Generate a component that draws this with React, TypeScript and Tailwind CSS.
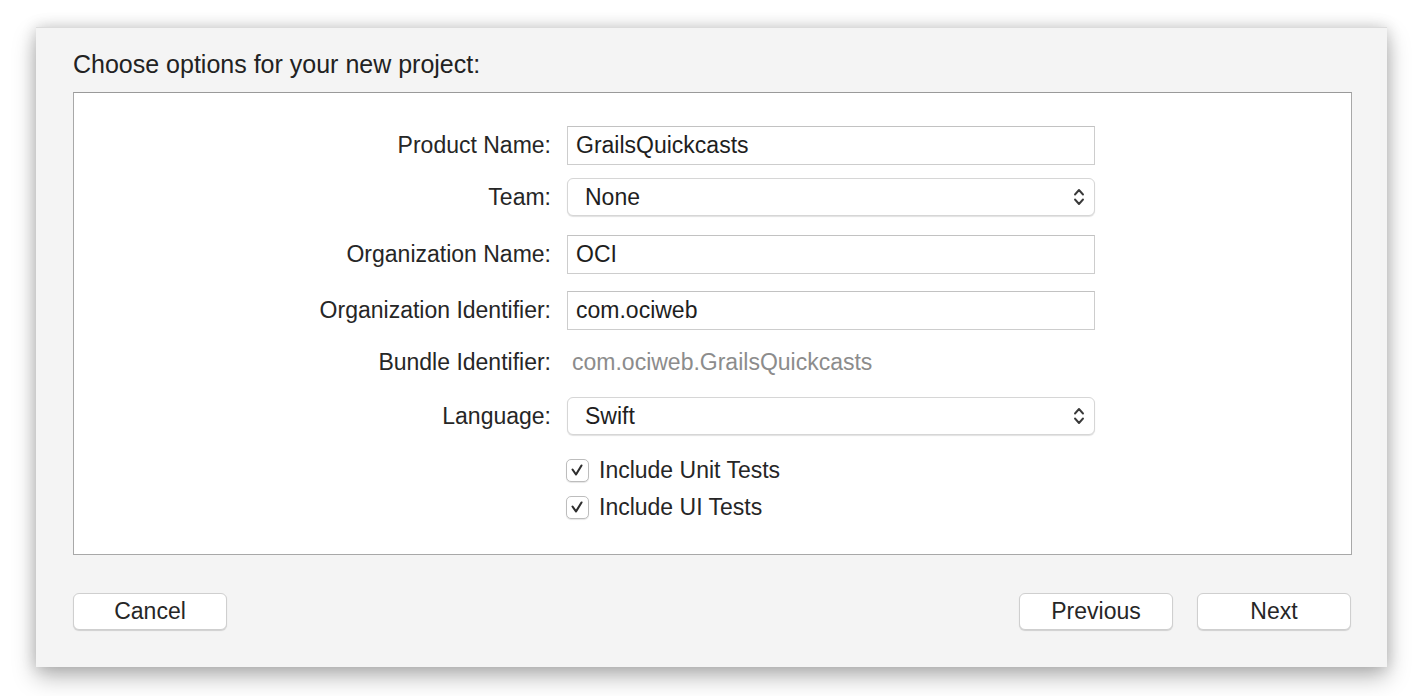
import { FC, ReactNode } from 'react';

const FONT = "font-['Liberation_Sans','Helvetica_Neue',Arial,sans-serif]";

// Up/down caret pair used by the popup buttons
const UpDown: FC = () => (
  <svg width="14" height="24" viewBox="0 0 14 24" fill="none">
    <path d="M3 9.5 L7 5 L11 9.5" stroke="#3a3a3a" strokeWidth="1.9" strokeLinecap="round" strokeLinejoin="round" />
    <path d="M3 14.5 L7 19 L11 14.5" stroke="#3a3a3a" strokeWidth="1.9" strokeLinecap="round" strokeLinejoin="round" />
  </svg>
);

const Check: FC = () => (
  <svg width="20" height="20" viewBox="0 0 20 20" fill="none">
    <path d="M4.5 9.5 L8 14.5 L13.5 5.5" stroke="#2e2e2e" strokeWidth="2.1" strokeLinecap="round" strokeLinejoin="round" />
  </svg>
);

interface RowProps {
  label: string;
  className: string;
  children: ReactNode;
}

const Row: FC<RowProps> = ({ label, className, children }) => (
  <div className={`grid grid-cols-[477px_528px] gap-x-[16px] items-center ${className}`}>
    <div className="text-right text-[23px] text-[#262626] leading-none">{label}</div>
    {children}
  </div>
);

const TextField: FC<{ value: string }> = ({ value }) => (
  <div className="h-[39px] bg-white border border-[#cdcdcd] border-t-[#c2c2c2] flex items-center pl-[8px] text-[23px] text-[#1e1e1e]">
    {value}
  </div>
);

const PopUp: FC<{ value: string }> = ({ value }) => (
  <div className="h-[38px] bg-white rounded-[6px] border border-[#d6d6d6] shadow-[0_1px_1px_rgba(0,0,0,0.12)] flex items-center justify-between pl-[17px] pr-[8px] text-[23px] text-[#1e1e1e]">
    <span>{value}</span>
    <UpDown />
  </div>
);

const CheckRow: FC<{ label: string; className: string }> = ({ label, className }) => (
  <div className={`h-[28px] flex items-center gap-[10px] ml-[492px] ${className}`}>
    <div className="w-[23px] h-[23px] rounded-[5px] bg-white border border-[#bdbdbd] shadow-[0_1px_1px_rgba(0,0,0,0.1)] flex items-center justify-center">
      <Check />
    </div>
    <span className="text-[23px] text-[#262626]">{label}</span>
  </div>
);

const MacButton: FC<{ label: string }> = ({ label }) => (
  <button className="w-[154px] h-[37px] bg-white rounded-[6px] border border-[#cfcfcf] shadow-[0_1px_1px_rgba(0,0,0,0.15)] text-[23px] text-[#262626] flex items-center justify-center">
    {label}
  </button>
);

export default function App() {
  return (
    <div className={`w-[1424px] h-[696px] bg-white pt-[27px] pl-[36px] ${FONT}`}>
      <div className="w-[1351px] h-[640px] bg-[#f4f4f4] border-t border-[#dcdcdc] shadow-[0_10px_22px_rgba(0,0,0,0.28),0_0_14px_rgba(0,0,0,0.16)] pl-[37px] pr-[35px] pt-[21px] flex flex-col">
        <div className="text-[25px] leading-[30px] text-[#222]">Choose options for your new project:</div>

        <div className="mt-[13px] h-[463px] bg-white border border-[#a8a8a8] border-t-[#9a9a9a] flex flex-col">
          <Row label="Product Name:" className="mt-[33px]">
            <TextField value="GrailsQuickcasts" />
          </Row>
          <Row label="Team:" className="mt-[13px]">
            <PopUp value="None" />
          </Row>
          <Row label="Organization Name:" className="mt-[19px]">
            <TextField value="OCI" />
          </Row>
          <Row label="Organization Identifier:" className="mt-[17px]">
            <TextField value="com.ociweb" />
          </Row>
          <Row label="Bundle Identifier:" className="mt-[17px] h-[30px]">
            <div className="pl-[5px] text-[23px] text-[#8c8c8c] leading-none">com.ociweb.GrailsQuickcasts</div>
          </Row>
          <Row label="Language:" className="mt-[20px]">
            <PopUp value="Swift" />
          </Row>
          <CheckRow label="Include Unit Tests" className="mt-[21px]" />
          <CheckRow label="Include UI Tests" className="mt-[9px]" />
        </div>

        <div className="mt-[38px] flex items-center justify-between pr-[1px]">
          <MacButton label="Cancel" />
          <div className="flex gap-[24px]">
            <MacButton label="Previous" />
            <MacButton label="Next" />
          </div>
        </div>
      </div>
    </div>
  );
}
